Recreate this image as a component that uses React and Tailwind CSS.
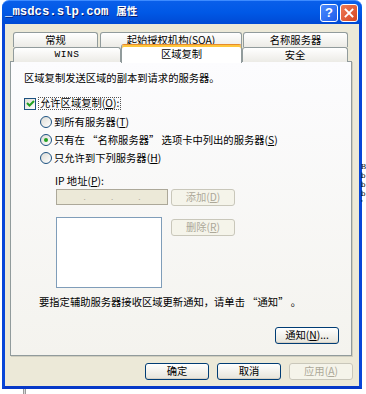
import React from "react";

const F = { fontFamily: '"Noto Sans CJK SC", "Liberation Sans", sans-serif' };

function U({ c }) {
  return <span className="underline">{c}</span>;
}

function Btn({ children, w = "w-[64px]", disabled, className = "" }) {
  return (
    <div
      className={
        "h-[17px] flex items-center justify-center rounded-[3px] border text-[10.3px] leading-none " +
        w +
        " " +
        (disabled
          ? "border-[#C9C7BA] bg-[#F5F4EA] text-[#ACA899] "
          : "border-[#003C74] bg-gradient-to-b from-white to-[#E6E4DA] text-black shadow-[inset_0_-1px_0_#D6D0C5] ") +
        className
      }
      style={F}
    >
      {children}
    </div>
  );
}

function Radio({ checked, children }) {
  return (
    <div className="h-[18px] flex items-center">
      <div className="w-[12px] h-[12px] rounded-full border border-[#1C5180] bg-gradient-to-br from-[#DCDBD5] to-white flex items-center justify-center">
        {checked && <div className="w-[4px] h-[4px] rounded-full bg-[#21A121]" />}
      </div>
      <span className="ml-[2px] text-[10.3px] leading-none text-black">{children}</span>
    </div>
  );
}

function Tab({ children, w, className = "" }) {
  return (
    <div
      className={
        "h-[15px] flex items-center justify-center border border-b-0 border-[#919B9C] rounded-t-[3px] bg-gradient-to-b from-white to-[#ECEBE6] text-[10.3px] leading-none text-black " +
        w +
        " " +
        className
      }
      style={F}
    >
      {children}
    </div>
  );
}

export default function App() {
  return (
    <div className="relative w-[366px] h-[394px] bg-white overflow-hidden" style={F}>
      {/* background window fragments */}
      <div className="absolute left-[361px] top-[163px] text-[7px] leading-[9px] text-black" style={{ fontFamily: '"DejaVu Serif", serif' }}>
        <div>B</div>
        <div>b</div>
        <div>b</div>
        <div>b</div>
        <div>'</div>
      </div>
      <div className="absolute left-[23px] top-[389px] w-[3px] h-[5px] border-x border-[#9A9A9A] bg-[#D8D8D8]" />

      <div className="ml-[2px] w-[360px] h-[389px] flex flex-col">
        {/* title bar */}
        <div className="h-[24px] rounded-t-[7px] bg-gradient-to-b from-[#0A5FEA] via-[#0058E6] to-[#0049D4] border-t border-[#3D8BFF] flex items-center relative">
          <div className="ml-[3px] text-white font-bold flex items-baseline" style={{ textShadow: "1px 1px 0 #0A1E70" }}>
            <span className="text-[12.3px]" style={{ fontFamily: '"Liberation Mono", monospace' }}>_msdcs.slp.com</span>
            <span className="ml-[8px] text-[10.5px]" style={F}>属性</span>
          </div>
          <div className="ml-auto mr-[4px] flex gap-[2px]">
            <div className="w-[18px] h-[18px] rounded-[3px] border border-white bg-gradient-to-br from-[#4B8BFF] to-[#1F5BEA] flex items-center justify-center text-white font-bold text-[13px] leading-none" style={{ fontFamily: '"Liberation Sans", sans-serif' }}>
              ?
            </div>
            <div className="w-[18px] h-[18px] rounded-[3px] border border-white bg-gradient-to-br from-[#EE7A55] to-[#D6451F] flex items-center justify-center">
              <svg width="10" height="10" viewBox="0 0 10 10">
                <path d="M1.5 1.5 L8.5 8.5 M8.5 1.5 L1.5 8.5" stroke="white" strokeWidth="1.8" strokeLinecap="square" />
              </svg>
            </div>
          </div>
        </div>

        {/* body */}
        <div className="flex-1 bg-[#ECE9D8] border-x-[3px] border-b-[3px] border-x-[#0846D8] border-b-[#0638C8] flex flex-col pt-[8px]">
          {/* tabs row 1 */}
          <div className="flex ml-[8px]">
            <Tab w="w-[85px]">常规</Tab>
            <Tab w="w-[142px]" className="ml-[2px]">起始授权机构(SOA)</Tab>
            <Tab w="w-[105px]" className="ml-[1px]">名称服务器</Tab>
          </div>
          {/* tabs row 2 */}
          <div className="flex ml-[8px] h-[15px] items-end relative z-10">
            <Tab w="w-[108px]" className="tracking-[0.5px]">
              <span style={{ fontFamily: '"Liberation Mono", monospace', fontSize: "9.5px" }}>WINS</span>
            </Tab>
            <div
              className="w-[121px] h-[19px] -mb-px border border-b-0 border-[#919B9C] border-t-[#E68B2C] rounded-t-[3px] bg-white shadow-[inset_0_2px_0_#FFC73C] flex items-center justify-center text-[10.3px] leading-none text-black pt-[1px]"
              style={F}
            >
              区域复制
            </div>
            <Tab w="w-[106px]">安全</Tab>
          </div>

          {/* panel */}
          <div className="ml-[5px] w-[342px] h-[295px] -mt-px border border-[#919B9C] bg-gradient-to-b from-[#FCFCFE] to-[#F4F3EE] shadow-[1px_1px_0_#D0CEBF] flex flex-col pl-[13px] pr-[12px] pt-[9px] text-black">
            <div className="h-[14px] flex items-center text-[10.3px] leading-none">区域复制发送区域的副本到请求的服务器。</div>

            <div className="mt-[12px] h-[13px] flex items-center">
              <div className="w-[12px] h-[12px] border border-[#1C5180] bg-gradient-to-br from-[#DCDBD5] to-white flex items-center justify-center">
                <svg width="9" height="9" viewBox="0 0 9 9">
                  <path d="M1 4 L3.5 6.5 L8 2" stroke="#21A121" strokeWidth="2" fill="none" />
                </svg>
              </div>
              <span className="ml-[2px] px-[1px] h-[13px] flex items-center border border-dotted border-[#555] text-[10.3px] leading-none">
                允许区域复制(<U c="O" />):
              </span>
            </div>

            <div className="mt-[3px] ml-[16px] flex flex-col">
              <Radio>
                到所有服务器(<U c="T" />)
              </Radio>
              <Radio checked>
                只有在 “名称服务器” 选项卡中列出的服务器(<U c="S" />)
              </Radio>
              <Radio>
                只允许到下列服务器(<U c="H" />)
              </Radio>
            </div>

            <div className="mt-[7px] ml-[31px] h-[14px] flex items-center text-[10.3px] leading-none">
              IP 地址(<U c="P" />):
            </div>

            <div className="mt-[1px] ml-[32px] flex items-start">
              <div className="w-[112px] h-[16px] border border-[#ACA899] bg-[#ECE9D8] flex items-center justify-around px-[14px] text-[#ACA899] text-[8px] leading-none">
                <span>.</span>
                <span>.</span>
                <span>.</span>
              </div>
              <Btn disabled className="ml-[3px]">
                添加(<U c="D" />)
              </Btn>
            </div>

            <div className="mt-[11px] ml-[32px] flex items-start">
              <div className="w-[106px] h-[71px] border border-[#7F9DB9] bg-white" />
              <Btn disabled className="ml-[9px] mt-[2px]">
                删除(<U c="R" />)
              </Btn>
            </div>

            <div className="mt-[7px] ml-[15px] h-[14px] flex items-center text-[10.3px] leading-none">
              要指定辅助服务器接收区域更新通知，请单击 “通知” 。
            </div>

            <div className="mt-[18px] flex justify-end">
              <Btn>
                通知(<U c="N" />)...
              </Btn>
            </div>
          </div>

          {/* bottom buttons */}
          <div className="mt-[7px] flex justify-end gap-[8px] mr-[6px]">
            <Btn>确定</Btn>
            <Btn>取消</Btn>
            <Btn disabled>
              应用(<U c="A" />)
            </Btn>
          </div>
        </div>
      </div>
    </div>
  );
}
